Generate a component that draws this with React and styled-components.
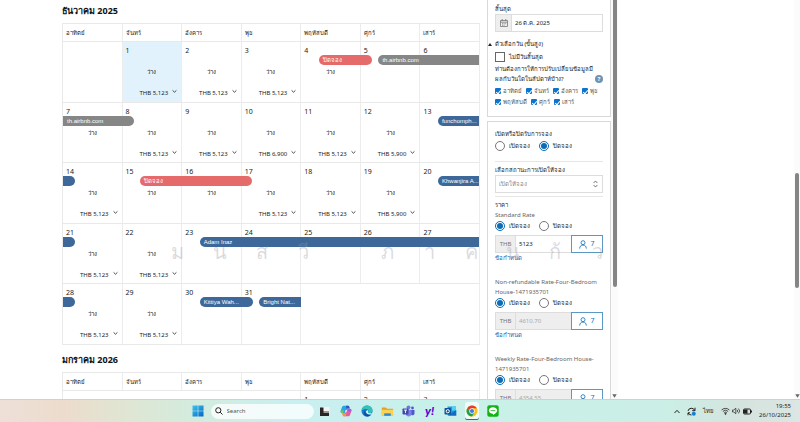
import React from 'react'
import styled, { createGlobalStyle } from 'styled-components'

const GlobalStyle = createGlobalStyle`
  * {
    box-sizing: border-box;
  }

  html,
  body {
    margin: 0;
    overflow: hidden;
  }

  body,
  button,
  input,
  select {
    font-family: 'Noto Sans', 'Liberation Sans', sans-serif;
    font-size: 6px;
    line-height: 10px;
    color: #222;
  }

  button,
  input,
  select {
    margin: 0;
    padding: 0;
    border: 0;
    border-radius: 0;
    background: none;
  }
`

const Screen = styled.div`
  height: 100vh;
  display: flex;
  flex-direction: column;
  background: #fff;
`

const Page = styled.div`
  position: relative;
  flex: 1;
  min-height: 0;
  display: flex;
  overflow: hidden;
`

const CalendarColumn = styled.main`
  flex: 1;
  padding: 4px 7px 0 62px;
`

const MonthTitle = styled.h2`
  margin: 0 0 5px;
  font-size: 9px;
  line-height: 14px;
  font-weight: 700;
  color: #111;
`

const MonthTable = styled.table`
  width: 100%;
  margin-bottom: 8px;
  table-layout: fixed;
  border-spacing: 0;
  border-top: 1px solid #e9e9e9;
  border-left: 1px solid #e9e9e9;

  th,
  td {
    position: relative;
    padding: 0;
    border-right: 1px solid #ececec;
    border-bottom: 1px solid #e9e9e9;
    text-align: left;
    vertical-align: top;
  }

  th {
    height: 18px;
    padding-left: 3px;
    font-weight: 400;
    color: #222;
    vertical-align: middle;
  }

  tbody tr {
    height: 61px;
  }

  tbody tr:nth-child(even) {
    height: 60px;
  }
`

const DayCell = styled.td`
  background: ${({ $today }) => ($today ? '#e2f2fc' : 'transparent')};
`

const DayNumber = styled.div`
  padding: 4px 3px 0;
  font-size: 7px;
`

const DayStatus = styled.div`
  margin-top: 11px;
  text-align: center;
`

const PriceButton = styled.button`
  width: 100%;
  margin-top: 11px;
  padding-right: 4px;
  display: flex;
  justify-content: flex-end;
  gap: 4px;
`

const barColors = { closed: '#e56b6b', airbnb: '#868686', guest: '#3d6899' }

const BookingBar = styled.div`
  position: absolute;
  z-index: 1;
  top: 13px;
  left: ${({ $from }) => $from}%;
  width: ${({ $span }) => $span}%;
  height: 10px;
  padding: 0 4px;
  overflow: hidden;
  white-space: nowrap;
  font-family: 'Liberation Sans', 'Noto Sans', sans-serif;
  color: #fff;
  background: ${({ $kind }) => barColors[$kind]};
  border-radius: ${({ $open }) =>
    ({ left: '0 5px 5px 0', right: '5px 0 0 5px', none: '5px' })[$open]};
`

const Sidebar = styled.aside`
  width: 131px;
  display: flex;
`

const Panels = styled.div`
  flex: 1;
  min-width: 0;
  display: flex;
  flex-direction: column;
  gap: 4px;
`

const Panel = styled.section`
  flex-shrink: 0;
  padding: ${({ $first }) => ($first ? '4px 7px 8px' : '7px 7px')};
  border: 1px solid #d9d9d9;
  border-top-width: ${({ $first }) => ($first ? 0 : 1)}px;
`

const FieldLabel = styled.label`
  display: block;
  color: #222;
`

const DateField = styled.div`
  height: 18px;
  display: flex;
  border: 1px solid #ddd;

  span {
    width: 16px;
    display: grid;
    place-items: center;
    background: #eee;
    border-right: 1px solid #ddd;
  }

  input {
    flex: 1;
    min-width: 0;
    padding-left: 3px;
  }
`

const Disclosure = styled.button`
  margin: 7px 0 3px -7px;
  display: flex;
  align-items: center;
  gap: 3px;
  color: #222;
`

const CheckLabel = styled.label`
  display: flex;
  align-items: center;
  gap: ${({ $small }) => ($small ? 2 : 4)}px;
  color: ${({ $small }) => ($small ? '#555' : '#222')};
`

const BigCheckbox = styled.input`
  appearance: none;
  width: 10px;
  height: 10px;
  border: 1px solid #666;
`

const DayCheckbox = styled.input`
  appearance: none;
  width: 6px;
  height: 6px;
  display: grid;
  place-items: center;
  border-radius: 1px;
  background: #0d74ce;

  &:checked::after {
    content: '';
    width: 2px;
    height: 4px;
    border: solid #fff;
    border-width: 0 1px 1px 0;
    transform: rotate(40deg);
  }
`

const Question = styled.div`
  margin: 2px 0;
  display: flex;
  align-items: flex-end;
  justify-content: space-between;
  color: #222;

  p {
    margin: 0;
    white-space: nowrap;
  }
`

const HelpButton = styled.button`
  width: 8px;
  height: 8px;
  margin-bottom: 1px;
  border-radius: 50%;
  line-height: 8px;
  font-weight: 700;
  color: #fff;
  background: #6f93b3;
`

const DayChecks = styled.div`
  display: flex;
  gap: 4px;
  padding-bottom: 1px;
`

const RadioRow = styled.div`
  display: flex;
  gap: 9px;
  padding: ${({ $loose }) => ($loose ? '2px 0 10px' : '1px 0 4px')};
`

const RadioLabel = styled.label`
  display: flex;
  align-items: center;
  gap: 4px;
  color: #222;
`

const Radio = styled.input`
  appearance: none;
  width: 10px;
  height: 10px;
  display: grid;
  place-items: center;
  border: 1px solid #777;
  border-radius: 50%;

  &:checked {
    border-color: #0c6cb5;
  }

  &:checked::after {
    content: '';
    width: 6px;
    height: 6px;
    border-radius: 50%;
    background: #0c6cb5;
  }
`

const Divider = styled.hr`
  margin: 0 0 3px;
  border: 0;
  border-top: 1px solid #e6e6e6;
`

const SelectBox = styled.div`
  position: relative;
  margin-bottom: 3px;

  select {
    appearance: none;
    width: 100%;
    height: 18px;
    padding-left: 3px;
    border: 1px solid #ddd;
    color: #888;
  }

  svg {
    position: absolute;
    right: 5px;
    top: 5px;
    pointer-events: none;
  }
`

const RateBlock = styled.div`
  padding-bottom: 14px;
`

const RateName = styled.div`
  color: #666;
`

const RateField = styled.div`
  height: 18px;
  display: flex;
  border: 1px solid #ddd;
  border-right: 0;
  background: ${({ $off }) => ($off ? '#eee' : '#fff')};

  label {
    width: 20px;
    line-height: 16px;
    text-align: center;
    color: #777;
    background: #eee;
    border-right: 1px solid #ddd;
  }

  input {
    flex: 1;
    min-width: 0;
    padding-left: 3px;
  }

  input:disabled {
    color: #aaa;
  }
`

const GuestsButton = styled.button`
  width: 32px;
  margin: -1px 0;
  display: flex;
  align-items: center;
  justify-content: center;
  gap: 3px;
  font-size: 7px;
  color: #0c6cb5;
  border: 1px solid #5c98c4;
  background: #fff;
`

const TermsLink = styled.a`
  display: block;
  color: #0c6cb5;
  text-decoration: none;
`

const Track = styled.div`
  width: ${({ $wide }) => ($wide ? 7 : 6)}px;
  display: flex;
  flex-direction: column;
  align-items: center;
  padding-bottom: 1px;
  background: #fbfbfb;
`

const TrackGap = styled.div`
  flex: ${({ $share }) => $share};
`

const Thumb = styled.div`
  width: 4px;
  flex: ${({ $share }) => $share};
  border-radius: ${({ $cut }) => ($cut ? '0 0 2px 2px' : '2px')};
  background: #858585;
`

const Blank = styled.div`
  width: 176px;
`

const Watermark = styled.div`
  position: absolute;
  z-index: 2;
  top: 236px;
  left: 157px;
  right: 182px;
  display: grid;
  grid-template-columns: repeat(11, 1fr);
  font-size: 20px;
  line-height: 32px;
  font-weight: 300;
  text-align: center;
  color: rgba(150, 150, 160, 0.34);
  pointer-events: none;
`

const Taskbar = styled.footer`
  height: 23px;
  display: flex;
  align-items: center;
  border-top: 1px solid #c9d4d1;
  background: linear-gradient(
    90deg,
    #eee0d8 0%,
    #ecdccd 8%,
    #dfe6d3 16%,
    #d2ecdf 25%,
    #c9eff0 36%,
    #c8f1e8 62%,
    #cbeee5 84%,
    #d5e3de 93%,
    #dce6e4 100%
  );
`

const TaskApps = styled.nav`
  flex: 1;
  padding-left: 16px;
  display: flex;
  align-items: center;
  justify-content: center;
  gap: 7px;
`

const AppButton = styled.button`
  width: 14px;
  height: 18px;
  display: grid;
  place-items: center;
  border-radius: 2px;
  background: ${({ $active }) => ($active ? 'rgba(255,255,255,.7)' : 'none')};
  box-shadow: ${({ $active }) => ($active ? 'inset 0 -1px #28776b' : 'none')};
`

const SearchBox = styled.label`
  width: 103px;
  height: 15px;
  margin: 0 -3px 0 -1px;
  padding: 0 4px;
  display: flex;
  align-items: center;
  gap: 4px;
  border-radius: 8px;
  background: rgba(255, 255, 255, 0.78);

  input {
    flex: 1;
    min-width: 0;
  }

  input::placeholder {
    color: #555;
    opacity: 1;
  }
`

const Tray = styled.div`
  padding-right: 9px;
  display: flex;
  align-items: center;
  gap: 7px;
`

const TrayGroup = styled.div`
  display: flex;
  align-items: center;
  gap: 2px;
`

const Clock = styled.time`
  line-height: 9px;
  text-align: right;
`

const weekdays = ['อาทิตย์', 'จันทร์', 'อังคาร', 'พุธ', 'พฤหัสบดี', 'ศุกร์', 'เสาร์']

const free = (day, price, extra) => ({ day, status: 'ว่าง', price, ...extra })
const bar = (kind, from, span, open, label) => ({ kind, from, span, open, label })

const december = [
  [
    { blank: 1 },
    free(1, '5,123', { today: true }),
    free(2, '5,123'),
    free(3, '5,123'),
    free(4, null, { bars: [bar('closed', 30, 90, 'none', 'ปิดจอง')] }),
    { day: 5, bars: [bar('airbnb', 30, 171, 'right', 'th.airbnb.com')] },
    { day: 6 },
  ],
  [
    free(7, null, { bars: [bar('airbnb', 0, 121, 'left', 'th.airbnb.com')] }),
    free(8, '5,123'),
    free(9, '5,123'),
    free(10, '6,900'),
    free(11, '5,123'),
    free(12, '5,900'),
    { day: 13, bars: [bar('guest', 30, 70, 'right', 'funchomph...')] },
  ],
  [
    free(14, '5,123', { bars: [bar('guest', 0, 20, 'left', '')] }),
    free(15, null, { bars: [bar('closed', 30, 191, 'none', 'ปิดจอง')] }),
    free(16, null),
    free(17, '5,123'),
    free(18, '5,123'),
    free(19, '5,900'),
    { day: 20, bars: [bar('guest', 30, 70, 'right', 'Khwanjira A...')] },
  ],
  [
    free(21, '5,123', { bars: [bar('guest', 0, 20, 'left', '')] }),
    free(22, '5,123'),
    { day: 23, bars: [bar('guest', 30, 477, 'right', 'Adam Inaz')] },
    { day: 24 },
    { day: 25 },
    { day: 26 },
    { day: 27 },
  ],
  [
    free(28, '5,123', { bars: [bar('guest', 0, 20, 'left', '')] }),
    free(29, '5,123'),
    { day: 30, bars: [bar('guest', 30, 91, 'none', 'Kittiya Wah...')] },
    { day: 31, bars: [bar('guest', 30, 72, 'right', 'Bright Nat...')] },
    { blank: 3 },
  ],
]

const january = [[{ blank: 4 }, { day: 1 }, { day: 2 }, { day: 3 }]]

const Chevron = () => (
  <svg width="5" height="8" viewBox="0 0 5 8" fill="none" stroke="#333" strokeWidth=".9">
    <path d="M.6 2.4 2.5 4.2 4.4 2.4" />
  </svg>
)

function Day({ data }) {
  if (data.blank) return <td colSpan={data.blank} />
  return (
    <DayCell $today={data.today}>
      <DayNumber>{data.day}</DayNumber>
      {data.status && <DayStatus>{data.status}</DayStatus>}
      {data.price && (
        <PriceButton type="button">
          THB {data.price}
          <Chevron />
        </PriceButton>
      )}
      {data.bars?.map((b) => (
        <BookingBar key={b.from} $kind={b.kind} $from={b.from} $span={b.span} $open={b.open}>
          {b.label}
        </BookingBar>
      ))}
    </DayCell>
  )
}

function Month({ title, weeks }) {
  return (
    <section>
      <MonthTitle>{title}</MonthTitle>
      <MonthTable>
        <thead>
          <tr>
            {weekdays.map((name) => (
              <th key={name} scope="col">
                {name}
              </th>
            ))}
          </tr>
        </thead>
        <tbody>
          {weeks.map((week, i) => (
            <tr key={i}>
              {week.map((d, j) => (
                <Day key={j} data={d} />
              ))}
            </tr>
          ))}
        </tbody>
      </MonthTable>
    </section>
  )
}

function OpenClose({ name, open, loose }) {
  return (
    <RadioRow $loose={loose}>
      <RadioLabel>
        <Radio type="radio" name={name} defaultChecked={open} />
        เปิดจอง
      </RadioLabel>
      <RadioLabel>
        <Radio type="radio" name={name} defaultChecked={!open} />
        ปิดจอง
      </RadioLabel>
    </RadioRow>
  )
}

function Rate({ id, name, value, disabled }) {
  return (
    <RateBlock>
      <RateName>{name}</RateName>
      <OpenClose name={`${id}-state`} open />
      <RateField $off={disabled}>
        <label htmlFor={id}>THB</label>
        <input id={id} defaultValue={value} disabled={disabled} />
        <GuestsButton type="button">
          <svg width="8" height="9" viewBox="0 0 8 9" fill="none" stroke="currentColor" strokeWidth=".8">
            <circle cx="4" cy="2.7" r="2" />
            <path d="M.7 8.6c0-2.3 1.3-3.5 3.3-3.5s3.3 1.2 3.3 3.5" />
          </svg>
          7
        </GuestsButton>
      </RateField>
      <TermsLink href="#terms">ข้อกำหนด</TermsLink>
    </RateBlock>
  )
}

const DownArrow = () => (
  <svg width="5" height="4" viewBox="0 0 5 4">
    <path d="M.3.3h4.4L2.5 3.7z" fill="#666" />
  </svg>
)

const WindowsIcon = () => (
  <svg width="12" height="12" viewBox="0 0 12 12">
    <defs>
      <linearGradient id="win" x2="1" y2="1">
        <stop stopColor="#3cc4f2" />
        <stop offset="1" stopColor="#0764c4" />
      </linearGradient>
    </defs>
    <path d="M.5.5h5.2v5.2H.5zM6.3.5h5.2v5.2H6.3zM.5 6.3h5.2v5.2H.5zM6.3 6.3h5.2v5.2H6.3z" fill="url(#win)" />
  </svg>
)

const TaskViewIcon = () => (
  <svg width="11" height="11" viewBox="0 0 11 11">
    <rect x="3.5" y="1" width="7" height="6" fill="#f4f4f4" />
    <rect x="4" y="5" width="6" height="3" fill="#999" />
    <path d="M1 1.5h3.5v5.500H10V10H1z" fill="#2b2424" />
  </svg>
)

const CopilotIcon = () => (
  <svg width="12" height="12" viewBox="0 0 12 12">
    <path d="M4 .8h3.800c.8 0 1.200.5 1.500 1.300l.4 1.400H7.200L5.600 8.200H2.300C.9 8.200.3 7 .7 5.700l1.200-3.400C2.300 1.300 3 .8 4 .8z" fill="#27a5e5" />
    <path d="M6 .8h1.800c.8 0 1.200.5 1.500 1.300l.4 1.400H6.400z" fill="#2457c9" />
    <path d="M.8 5.500 4 5.200 3 8.200h-.7C.9 8.200.3 7 .8 5.500z" fill="#7cc552" />
    <path d="M8 11.200H4.200c-.8 0-1.200-.5-1.500-1.300l-.4-1.400h2.500l1.600-4.700h3.300c1.400 0 2 1.200 1.600 2.500l-1.200 3.400c-.4 1-1.100 1.500-2.100 1.500z" fill="#e45d9d" />
    <path d="M8 3.800h1.700c1.400 0 2 1.200 1.600 2.500L8 6.600z" fill="#a45be0" />
    <path d="M6 11.200H4.200c-.8 0-1.200-.5-1.500-1.300l-.4-1.400h3.900z" fill="#f6983b" />
    <path d="M5.700 5h1.400l-.8 2.400H4.900z" fill="#e6f7f5" />
  </svg>
)

const EdgeIcon = () => (
  <svg width="12" height="12" viewBox="0 0 12 12">
    <circle cx="6" cy="6" r="5.5" fill="#1479cf" />
    <path d="M.6 5.6C.9 2.6 3.200.5 6.100.5c3.100 0 5.400 2.200 5.400 4.700 0 1.800-1.300 2.900-2.900 2.900-1.300 0-1.800-.5-1.500-1.100.9-1.600-.2-3-2-3C3.100 4 1.200 4.500.6 5.600z" fill="#35c1b4" />
    <path d="M4.300 5.600c-.9 2.600 1.500 4.900 5.900 3.900C9 11 7.500 11.500 6 11.500 3 11.300 1.700 7.200 4.300 5.600z" fill="#0d4f9e" />
    <path d="M6.900 5.300c.5.900-.2 1.500.1 2.200.5 1 2.700 1 4 .2L10.200 9.400C7.500 10 5 8.700 5 6.800c0-.9.900-1.700 1.900-1.500z" fill="#d9f4f2" />
  </svg>
)

const FolderIcon = () => (
  <svg width="13" height="11" viewBox="0 0 13 11">
    <path d="M.8 1.500h4l1.200 1.300h6v7H.8z" fill="#e5a01d" />
    <path d="M.8 3.800h11.400v6H.8z" fill="#fbd252" />
    <path d="M3.200 7.400h6.600v2.400H3.200z" fill="#2b88cf" />
  </svg>
)

const TeamsIcon = () => (
  <svg width="13" height="12" viewBox="0 0 13 12">
    <circle cx="6.500" cy="2.300" r="1.900" fill="#6f76dd" />
    <circle cx="10.500" cy="3" r="1.400" fill="#5059c9" />
    <path d="M8.500 5h4v3.200c0 1.300-1 2.100-2.200 2.100S8.500 9 8.500 8z" fill="#5059c9" />
    <path d="M3.800 4.700h5.700v4c0 1.600-1.200 2.800-2.900 2.800S3.800 10.200 3.800 8.700z" fill="#7b83eb" />
    <rect x=".5" y="3.500" width="6" height="6" rx=".7" fill="#4348ad" />
    <path d="M2 5.100h3M3.500 5.100v3" stroke="#fff" strokeWidth=".9" />
  </svg>
)

const YahooMark = styled.span`
  font-family: Lato, sans-serif;
  font-size: 12px;
  line-height: 12px;
  font-weight: 900;
  font-style: italic;
  color: #5f01d1;
`

const OutlookIcon = () => (
  <svg width="13" height="12" viewBox="0 0 13 12">
    <path d="M3.500 1.500h8.500v8.500H3.500z" fill="#1e9be0" />
    <path d="M8 1.500h4v4H8z" fill="#50d0f5" />
    <path d="M3.500 10.800 12.300 5v5.800z" fill="#106ebe" />
    <rect x=".5" y="3" width="6.500" height="6.500" rx=".8" fill="#0a559f" />
    <circle cx="3.750" cy="6.250" r="1.600" fill="none" stroke="#fff" />
  </svg>
)

const ChromeIcon = () => (
  <svg width="12" height="12" viewBox="0 0 12 12">
    <circle cx="6" cy="6" r="5.500" fill="#fbc116" />
    <path d="M6 6 1.240 3.250A5.500 5.500 0 0 1 10.760 3.250H6z" fill="#e33b2e" />
    <path d="M6 6 1.240 3.250A5.500 5.500 0 0 0 6 11.500L8.400 7.400z" fill="#269f4b" />
    <circle cx="6" cy="6" r="2.700" fill="#fff" />
    <circle cx="6" cy="6" r="2.100" fill="#3b7de8" />
  </svg>
)

const LineIcon = () => (
  <svg width="12" height="12" viewBox="0 0 12 12">
    <rect x=".3" y=".3" width="11.400" height="11.400" rx="2" fill="#12b312" />
    <path d="M6 2.300c2.400 0 4.200 1.400 4.200 3.300 0 1.700-2 3.200-4.200 4.400v-1.200C3.600 8.800 1.800 7.500 1.800 5.600S3.600 2.300 6 2.300z" fill="#fff" />
    <path d="M3.700 5.600h4.600" stroke="#12b312" strokeWidth=".8" />
  </svg>
)

const apps = [
  ['Task view', TaskViewIcon],
  ['Copilot', CopilotIcon],
  ['Edge', EdgeIcon],
  ['Explorer', FolderIcon],
  ['Teams', TeamsIcon],
  ['Yahoo', () => <YahooMark>y!</YahooMark>],
  ['Outlook', OutlookIcon],
  ['Chrome', ChromeIcon],
  ['LINE', LineIcon],
]

export default function App() {
  return (
    <Screen>
      <GlobalStyle />
      <Page>
        <CalendarColumn>
          <Month title="ธันวาคม 2025" weeks={december} />
          <Month title="มกราคม 2026" weeks={january} />
        </CalendarColumn>

        <Sidebar>
          <Panels>
            <Panel $first>
              <FieldLabel htmlFor="end-date">สิ้นสุด</FieldLabel>
              <DateField>
                <span>
                  <svg width="8" height="8" viewBox="0 0 8 8" fill="none" stroke="#777" strokeWidth=".8">
                    <path d="M.5 1.500h7v6h-7zM.5 3.200h7M2.200 0v2M5.800 0v2M2 4.700h1M3.600 4.700h1M5.200 4.700h1M2 6.200h1M3.600 6.200h1" />
                  </svg>
                </span>
                <input id="end-date" defaultValue="26 ต.ค. 2025" />
              </DateField>
              <Disclosure type="button">
                <svg width="4" height="3" viewBox="0 0 4 3">
                  <path d="M0 3 2 0l2 3z" fill="#222" />
                </svg>
                ตัวเลือกวัน (ขั้นสูง)
              </Disclosure>
              <CheckLabel>
                <BigCheckbox type="checkbox" />
                ไม่มีวันสิ้นสุด
              </CheckLabel>
              <Question>
                <p>
                  ท่านต้องการให้การปรับเปลี่ยนข้อมูลมี
                  <br />
                  ผลกับวันใดในสัปดาห์บ้าง?
                </p>
                <HelpButton type="button">?</HelpButton>
              </Question>
              {[weekdays.slice(0, 4), weekdays.slice(4)].map((days) => (
                <DayChecks key={days[0]}>
                  {days.map((name) => (
                    <CheckLabel key={name} $small>
                      <DayCheckbox type="checkbox" defaultChecked />
                      {name}
                    </CheckLabel>
                  ))}
                </DayChecks>
              ))}
            </Panel>

            <Panel>
              <FieldLabel as="div">เปิดหรือปิดรับการจอง</FieldLabel>
              <OpenClose name="bookings" loose />
              <Divider />
              <FieldLabel htmlFor="status">เลือกสถานะการเปิดให้จอง</FieldLabel>
              <SelectBox>
                <select id="status">
                  <option>เปิดให้จอง</option>
                </select>
                <svg width="5" height="8" viewBox="0 0 5 8" fill="none" stroke="#555" strokeWidth=".8">
                  <path d="M.6 3 2.500 1l1.900 2M.6 5l1.900 2 1.900-2" />
                </svg>
              </SelectBox>
              <Divider />
              <FieldLabel as="div">ราคา</FieldLabel>
              <Rate id="standard" name="Standard Rate" value="5123" />
              <Rate
                id="non-refundable"
                name="Non-refundable Rate-Four-Bedroom House-1471935701"
                value="4610.70"
                disabled
              />
              <Rate
                id="weekly"
                name="Weekly Rate-Four-Bedroom House-1471935701"
                value="4354.55"
                disabled
              />
            </Panel>
          </Panels>
          <Track $wide>
            <Thumb $share={72} $cut />
            <TrackGap $share={27} />
            <DownArrow />
          </Track>
        </Sidebar>

        <Blank />
        <Track>
          <TrackGap $share={44} />
          <Thumb $share={29} />
          <TrackGap $share={27} />
          <DownArrow />
        </Track>

        <Watermark aria-hidden="true">
          {['ม', 'น', 'ส', 'วี', '', 'ภ', 'า', 'ค', 'น', 'ก้', 'ว'].map((c, i) => (
            <span key={i}>{c}</span>
          ))}
        </Watermark>
      </Page>

      <Taskbar>
        <TaskApps>
          <AppButton type="button" aria-label="Start">
            <WindowsIcon />
          </AppButton>
          <SearchBox>
            <svg width="8" height="8" viewBox="0 0 8 8" fill="none" stroke="#222">
              <circle cx="3.300" cy="3.300" r="2.600" />
              <path d="m5.200 5.200 2.300 2.300" />
            </svg>
            <input type="search" placeholder="Search" aria-label="Search" />
          </SearchBox>
          {apps.map(([name, Icon]) => (
            <AppButton key={name} type="button" aria-label={name} $active={name === 'Chrome'}>
              <Icon />
            </AppButton>
          ))}
        </TaskApps>
        <Tray>
          <svg width="6" height="5" viewBox="0 0 6 5" fill="none" stroke="#222">
            <path d="M.5 4 3 1.300 5.500 4" />
          </svg>
          <svg width="9" height="9" viewBox="0 0 9 9" fill="none" stroke="#222">
            <path d="M7.700 3.500A3.500 3.500 0 0 0 1 4M1.200 6A3.500 3.500 0 0 0 4.500 8M8 .7v3H5.200M1 8.300V5.800h2" />
            <circle cx="6.800" cy="6.800" r="2" fill="#1680d0" stroke="none" />
          </svg>
          <span>ไทย</span>
          <TrayGroup>
            <svg width="9" height="8" viewBox="0 0 9 8" fill="none" stroke="#333" strokeWidth=".9">
              <path d="M.6 3a5.600 5.600 0 0 1 7.800 0M1.900 4.400a3.700 3.700 0 0 1 5.200 0M3.200 5.800a1.800 1.800 0 0 1 2.600 0" />
              <circle cx="4.500" cy="6.800" r=".6" fill="#333" />
            </svg>
            <svg width="9" height="8" viewBox="0 0 9 8" fill="none" stroke="#333" strokeWidth=".8">
              <path d="M.5 3h1.300L3.800 1.200v5.600L1.800 5H.5zM5.200 2.800a2 2 0 0 1 0 2.400M6.500 1.600a3.500 3.500 0 0 1 0 4.800" />
            </svg>
            <svg width="9" height="7" viewBox="0 0 9 7">
              <rect x=".5" y="1" width="7" height="5" rx="1" fill="none" stroke="#222" />
              <path d="M1 1.500h3.500v4H1zM8 2.500h1v2H8z" fill="#222" />
            </svg>
          </TrayGroup>
          <Clock>
            19:55
            <br />
            26/10/2025
          </Clock>
        </Tray>
      </Taskbar>
    </Screen>
  )
}
